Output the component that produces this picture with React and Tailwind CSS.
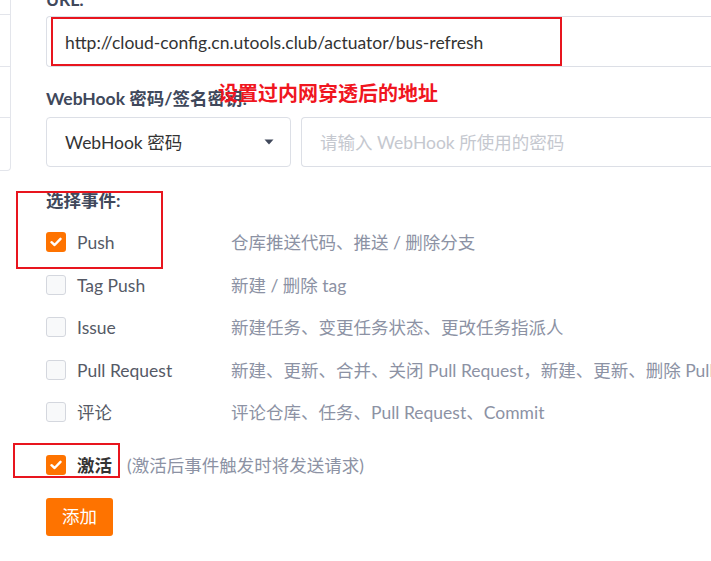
import { useState } from "react";

const events = [
  { key: "push", label: "Push", desc: "仓库推送代码、推送 / 删除分支" },
  { key: "tag", label: "Tag Push", desc: "新建 / 删除 tag" },
  { key: "issue", label: "Issue", desc: "新建任务、变更任务状态、更改任务指派人" },
  { key: "pr", label: "Pull Request", desc: "新建、更新、合并、关闭 Pull Request，新建、更新、删除 Pull Request 下标签，关联、取消关联 Issue" },
  { key: "note", label: "评论", desc: "评论仓库、任务、Pull Request、Commit" },
];

function Check({ checked }) {
  return checked ? (
    <span className="flex h-5 w-5 shrink-0 items-center justify-center rounded-[3px] bg-[#fe7300]">
      <svg width="12" height="10" viewBox="0 0 12 10" fill="none">
        <path d="M1.5 5.2 4.6 8 10.5 1.8" stroke="white" strokeWidth="2.4" strokeLinecap="round" strokeLinejoin="round" />
      </svg>
    </span>
  ) : (
    <span className="h-5 w-5 shrink-0 rounded-[3px] border border-[#d4d7de] bg-[#f8f9fa]" />
  );
}

export default function App() {
  const [checked, setChecked] = useState({ push: true });
  const [active, setActive] = useState(true);

  const toggle = (k) => setChecked((prev) => ({ ...prev, [k]: !prev[k] }));

  return (
    <div className="relative flex h-[561px] w-[711px] overflow-hidden bg-white font-['Lato','Noto_Sans_CJK_SC',sans-serif] text-[17.5px] text-[#40485b]">
      {/* side menu, mostly off screen */}
      <div className="flex w-[11px] shrink-0 flex-col self-start rounded-br-[4px] border-r border-b border-[#e3e5eb]">
        <div className="h-[15px] border-b border-[#e3e5eb]" />
        <div className="h-[52px] border-b border-[#e3e5eb]" />
        <div className="h-[51px] border-b border-[#e3e5eb]" />
        <div className="h-[52px]" />
      </div>

      <div className="ml-[35px] mt-[-12px] flex min-w-0 flex-1 flex-col">
        <div className="mb-1 h-6 font-bold leading-6">URL:</div>
        <div className="flex h-[51px] items-center rounded-l-[4px] border border-r-0 border-[#dcdfe6] pl-[18px] pt-[3px] text-[#333]">
          http://cloud-config.cn.utools.club/actuator/bus-refresh
        </div>

        <div className="mt-5 mb-[6px] h-6 font-bold leading-6">WebHook 密码/签名密钥:</div>
        <div className="flex gap-[10px]">
          <div className="flex h-[50px] w-[245px] shrink-0 items-center justify-between rounded-[4px] border border-[#dcdfe6] pl-[18px] pr-[16px] text-[#333]">
            <span className="pt-[3px]">WebHook 密码</span>
            <svg width="10" height="6" viewBox="0 0 10 6">
              <path d="M0.5 0.5h9L5 5.5z" fill="#40485b" />
            </svg>
          </div>
          <div className="flex h-[50px] flex-1 items-center rounded-l-[4px] border border-r-0 border-[#dcdfe6] pl-[18px] pt-[3px] text-[#c5c8cf]">
            请输入 WebHook 所使用的密码
          </div>
        </div>

        <div className="mt-[22px] h-6 font-bold leading-6">选择事件:</div>
        <div className="mt-2 flex flex-col">
          {events.map((e) => (
            <div key={e.key} className="flex h-[42.5px] cursor-pointer items-center whitespace-nowrap" onClick={() => toggle(e.key)}>
              <Check checked={!!checked[e.key]} />
              <span className="ml-[11px] w-[154px] shrink-0 pt-[2px] text-[#555a66]">{e.label}</span>
              <span className="pt-[2px] text-[#8c92a4]">{e.desc}</span>
            </div>
          ))}
        </div>

        <div className="mt-[10px] flex h-[43px] cursor-pointer items-center whitespace-nowrap" onClick={() => setActive(!active)}>
          <Check checked={active} />
          <span className="ml-[11px] pt-[2px] font-bold text-[#333]">激活</span>
          <span className="ml-[15px] pt-[2px] text-[#8c92a4]">(激活后事件触发时将发送请求)</span>
        </div>

        <button className="mt-[11px] h-[38px] w-[67px] rounded-[3px] bg-[#fe7300] pt-[2px] text-white">添加</button>
      </div>

      {/* annotations */}
      <div className="pointer-events-none absolute left-[51px] top-[17px] h-[49px] w-[511px] border-2 border-[#e8151e]" />
      <div className="pointer-events-none absolute left-[218px] top-[79px] text-[20px] font-bold leading-7 text-[#f0161f]">设置过内网穿透后的地址</div>
      <div className="pointer-events-none absolute left-[16px] top-[191px] h-[78px] w-[147px] border-2 border-[#e8151e]" />
      <div className="pointer-events-none absolute left-[13px] top-[443px] h-[35px] w-[107px] border-2 border-[#e8151e]" />
    </div>
  );
}
